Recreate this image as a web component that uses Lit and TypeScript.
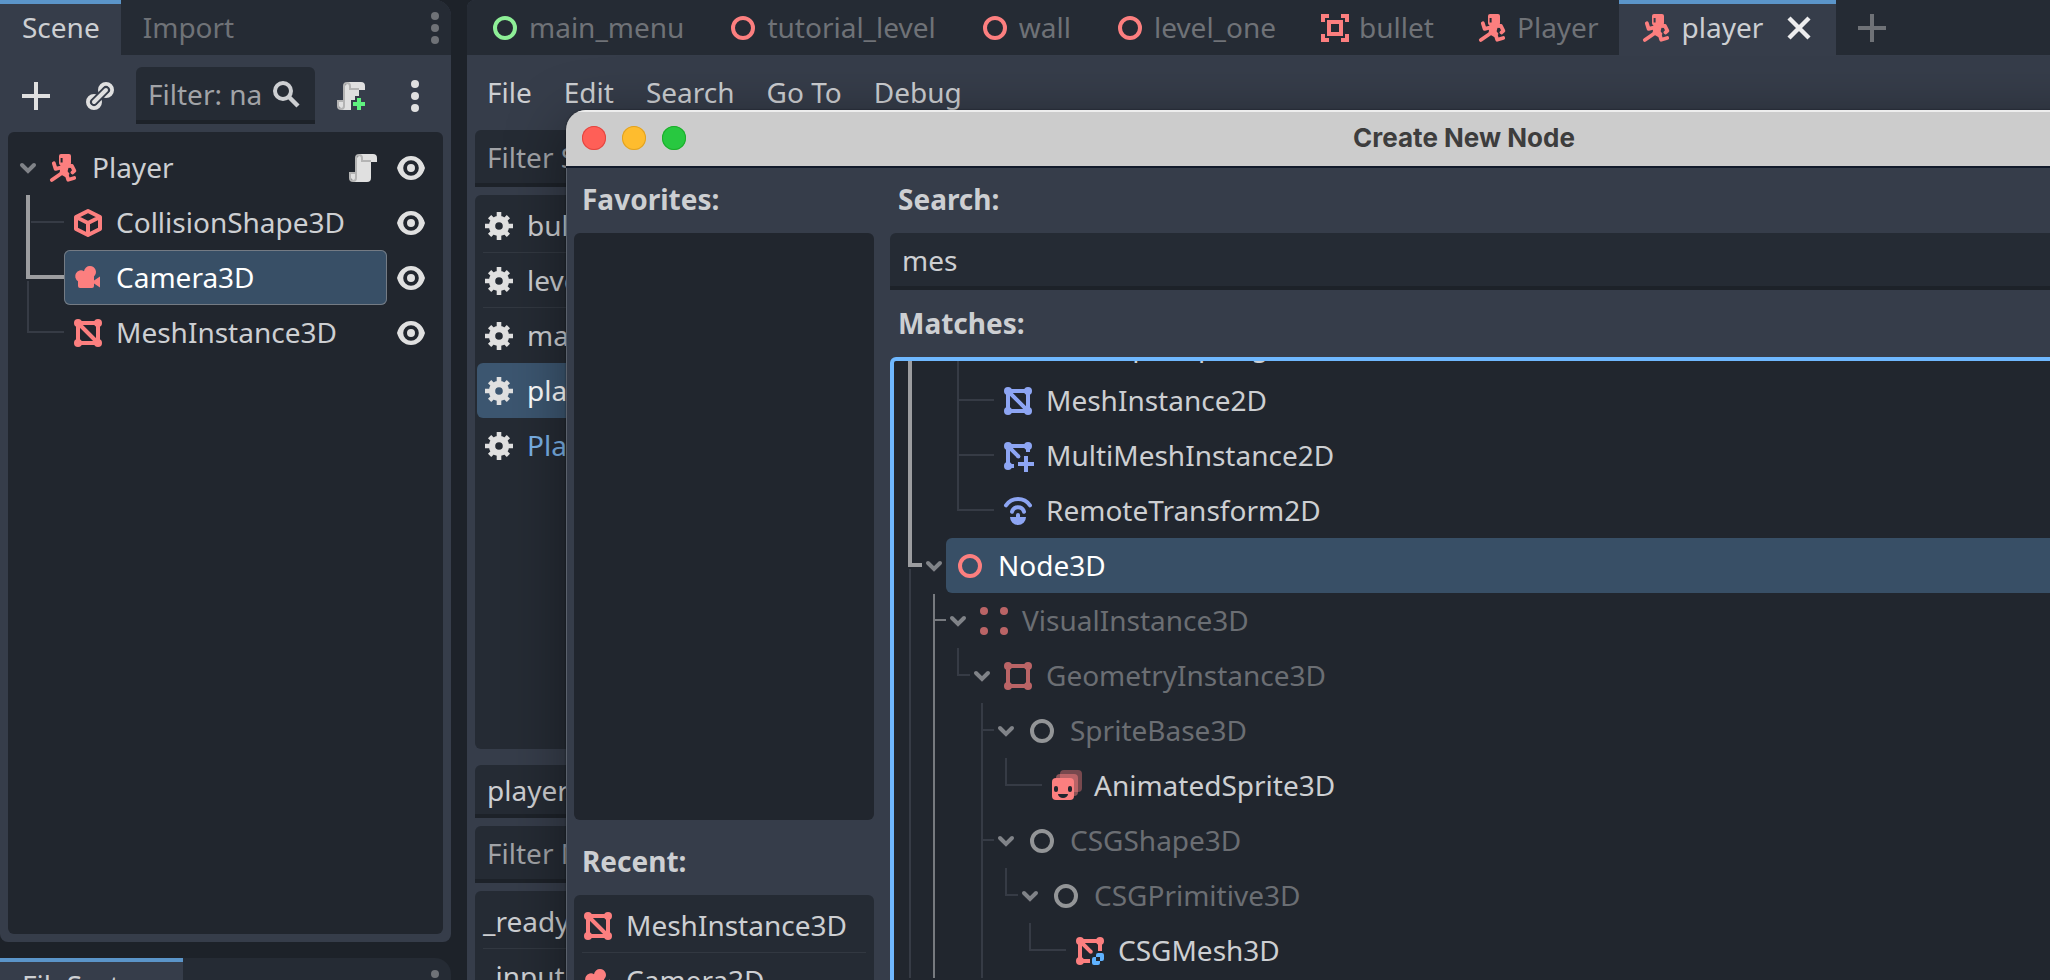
import { LitElement, html, svg, css, nothing } from "lit";
import { customElement, property } from "lit/decorators.js";
import { classMap } from "lit/directives/class-map.js";

const RED = "#fc7f7f";
const BLUE = "#8da5f3";
const GREY = "#e0e0e0";

const corners = (c: string) => svg`<g fill=${c}>
  <circle cx="3" cy="3" r="2"/><circle cx="13" cy="3" r="2"/>
  <circle cx="3" cy="13" r="2"/><circle cx="13" cy="13" r="2"/></g>`;

const ring = (c: string) => svg`<circle cx="8" cy="8" r="5" fill="none" stroke=${c} stroke-width="2"/>`;

const mesh = (c: string) => svg`${corners(c)}
  <path d="M3 3h10v10H3zL13 13" fill="none" stroke=${c} stroke-width="2"/>`;

const scroll = svg`
  <path fill="#e0e0e0" d="M6 1v1a1 1 0 0 0-1 1v10H4v-2H2v2a1 1 0 0 0 1 1v1h7a2 2 0 0 0 2-2V5h3V3a2 2 0 0 0-2-2z"/>
  <path fill="#b4b4b4" d="M6 1a2 2 0 0 0-2 2v7H1v3a2 2 0 0 0 4 0V3a1 1 0 0 1 2 0v2h5V4H8V3a2 2 0 0 0-2-2zM2 11h2v2a1 1 0 0 1-2 0z"/>`;

const ICONS: Record<string, unknown> = {
  node: ring("#c4c4c4"),
  node3d: ring(RED),
  control: ring("#8eef97"),
  mesh3d: mesh(RED),
  mesh2d: mesh(BLUE),
  geometry: svg`${corners(RED)}<path d="M3 3h10v10H3z" fill="none" stroke=${RED} stroke-width="2"/>`,
  visual: corners(RED),
  multimesh: svg`<g fill=${BLUE}><circle cx="3" cy="3" r="2"/><circle cx="13" cy="3" r="2"/><circle cx="3" cy="13" r="2"/></g>
    <path d="M13 6V3H3v10h3M3 3l5.3 5.3" fill="none" stroke=${BLUE} stroke-width="2"/>
    <path d="M12 8v8M8 12h8" stroke=${BLUE} stroke-width="2"/><circle cx="8.2" cy="8.2" r="1" fill=${BLUE}/>`,
  csgmesh: svg`<g fill=${RED}><circle cx="3" cy="3" r="2"/><circle cx="13" cy="3" r="2"/><circle cx="3" cy="13" r="2"/></g>
    <path d="M13 8V3H3v10h5M3 3l5.3 5.3" fill="none" stroke=${RED} stroke-width="2"/><circle cx="8.4" cy="8.4" r="1" fill=${RED}/>
    <path fill="#5fb2ff" fill-rule="evenodd" d="M12 9h2a1 1 0 0 1 1 1v2a1 1 0 0 1-1 1h-1v1a1 1 0 0 1-1 1h-2a1 1 0 0 1-1-1v-2a1 1 0 0 1 1-1h1v-1a1 1 0 0 1 1-1zM11 11v2h2v-2z"/>`,
  remote: svg`<g fill="none" stroke=${BLUE} stroke-width="2" stroke-linecap="round">
      <path d="M2 5.2C5 1 11 1 14 5.2"/><path d="M5 8.4a3.1 3.1 0 0 1 6 0"/></g>
    <path fill=${BLUE} d="M4 11h3v-1a1 1 0 0 1 2 0v1h3a4 4 0 0 1-8 0z"/>`,
  animated: svg`<g fill=${RED}><rect x="5" y="0" width="11" height="11" rx="2" opacity=".4"/>
      <rect x="3" y="2" width="11" height="11" rx="2" opacity=".5"/>
      <rect x="1" y="4" width="11" height="11" rx="2"/></g>
    <g fill="#21262e"><rect x="2" y="8" width="2" height="3" rx="1"/><rect x="9" y="8" width="2" height="3" rx="1"/>
      <path d="M4 12h5a2.5 2 0 0 1-5 0z"/></g>`,
  shape: svg`<path d="M8 2 2 5v6l6 3 6-3V5zM2 5l6 3 6-3M8 8v6" fill="none" stroke=${RED} stroke-width="2" stroke-linejoin="round"/>`,
  camera: svg`<path fill=${RED} d="M9 2a3 3 0 0 0-3 2.6A2.7 2.7 0 1 0 3 9.6V12a1 1 0 0 0 1 1h6a1 1 0 0 0 1-1v-1.2l3 2V7.2l-3 2V7.2A3 3 0 0 0 9 2z"/>`,
  body: svg`<path fill=${RED} fill-rule="evenodd" d="M6.5 1h4a1 1 0 0 1 1 1v3.6a1 1 0 0 1-1 1h-4a1 1 0 0 1-1-1V2a1 1 0 0 1 1-1zM6.3 3v2.2h1V3z"/>
    <path fill=${RED} d="M6.2 6.5h4.4L9.800 9.600l1 1.400-2 1.600-3-1.700z"/>
    <g fill="none" stroke=${RED} stroke-width="1.900" stroke-linecap="round" stroke-linejoin="round">
      <path d="M2.900 5.600l.9 2.800 3.600-.8"/><path d="M9.600 6.900l2.400.1 1.200 2.400-1 .8"/>
      <path d="M6.800 10.600 1.900 14"/><path d="M9.200 10.800l.9 3.100 3-.9"/></g>`,
  area: svg`<g fill="none" stroke=${RED} stroke-width="2"><path d="M2 5V2h3M11 2h3v3M14 11v3h-3M5 14H2v-3"/><path d="M5 5h6v6H5z"/></g>`,
  script: scroll,
  scriptadd: svg`<mask id="cut"><path d="M0 0h16v16H0z" fill="#fff"/><path d="M10 8h4v2h2v6H8v-6h2z" fill="#000"/></mask>
    <g mask="url(#cut)">${scroll}</g><path fill="#5ff27f" d="M11 9h2v2h2v2h-2v2h-2v-2H9v-2h2z"/>`,
  eye: svg`<path fill=${GREY} fill-rule="evenodd" d="M8 2C4.600 2 2 4.400 1 8c1 3.600 3.600 6 7 6s6-2.400 7-6c-1-3.600-3.600-6-7-6zM8 4.100a3.900 3.900 0 1 1 0 7.800 3.900 3.900 0 0 1 0-7.800zM8 6a2 2 0 1 0 0 4 2 2 0 0 0 0-4z"/>`,
  gear: svg`<g fill="none" stroke=${GREY}><circle cx="8" cy="8" r="3.500" stroke-width="3.200"/>
    <g stroke-width="2.300"><path d="M8 1v3M8 12v3M1 8h3M12 8h3"/><path d="M3.300 3.300l2 2M10.700 10.700l2 2M3.300 12.700l2-2M10.700 5.300l2-2"/></g></g>`,
  add: svg`<path d="M8 1v14M1 8h14" stroke="currentColor" stroke-width="2"/>`,
  link: svg`<g fill="none"><circle cx="11" cy="5" r="2.900" stroke=${GREY} stroke-width="2.200"/><circle cx="5" cy="11" r="2.900" stroke=${GREY} stroke-width="2.200"/>
    <path d="M5 11l6-6" stroke="#363d4a" stroke-width="4" stroke-linecap="round"/><path d="M5 11l6-6" stroke=${GREY} stroke-width="2" stroke-linecap="round"/></g>`,
  search: svg`<circle cx="6" cy="6" r="4" fill="none" stroke="#cdcfd2" stroke-width="2"/><path d="M9 9l4.500 4.500" stroke="#cdcfd2" stroke-width="2.200"/>`,
  more: svg`<g fill="currentColor"><circle cx="8" cy="2" r="2"/><circle cx="8" cy="8" r="2"/><circle cx="8" cy="14" r="2"/></g>`,
  close: svg`<path d="M3 3l10 10M13 3L3 13" stroke="#ededee" stroke-width="2.200"/>`,
};

const icon = (name: string) =>
  html`<svg class="icon" viewBox="0 0 16 16" width="32" height="32" aria-hidden="true">${ICONS[name]}</svg>`;

const shared = css`
  * { box-sizing: border-box; }
  button, input { font: inherit; color: inherit; border: 0; margin: 0; padding: 0; background: none; border-radius: 0; outline: 0; text-align: left; }
  .icon { display: block; flex: none; overflow: visible; }
`;

/* Guide marks: each column of a row names the line it carries.
   | straight, + branch, L last branch, blank none; T is the highlighted path,
   H the highlighted turn, B a branch leaving the highlighted path,
   M and N the children of a selected item. */
type Row = { text: string; icon: string; guides: string; open?: boolean; selected?: boolean; dim?: boolean; script?: boolean };

const THIN = "#363b45";
const MID = "#777a7f";
const THICK = "#9c9da0";

@customElement("node-tree")
class NodeTree extends LitElement {
  @property({ attribute: false }) rows: Row[] = [];
  @property({ type: Boolean }) actions = false;

  static styles = [shared, css`
    :host { display: block; }
    .row { display: flex; height: 55px; }
    .guide, .fold { display: block; flex: none; overflow: visible; }
    .item { display: flex; align-items: center; gap: 12px; flex: 1; min-width: 0; height: 55px; padding: 0 8px; color: #cdcfd2; white-space: nowrap; border-radius: 6px; }
    .dim { color: #6b6e73; }
    .dim .icon { opacity: .7; }
    .selected { background: #384f66; color: #fff; }
    .outlined { box-shadow: inset 0 0 0 1px #747b84; }
    .tools { display: flex; align-items: center; gap: 16px; padding: 0 16px 0 8px; }
  `];

  private guide(kind: string, leaf: boolean) {
    const end = leaf ? 48 : 24;
    const v = (c: string, y1: number, y2: number) => svg`<rect x="11" y=${y1} width="2" height=${y2 - y1} fill=${c}/>`;
    const h = (c: string, x = 13) => svg`<rect x=${x} y="26" width=${end - x} height="2" fill=${c}/>`;
    const bar = svg`<rect x="10" y="0" width="4" height="55" fill=${THICK}/>`;
    const marks: Record<string, unknown> = {
      "|": v(THIN, 0, 55),
      "+": svg`${v(THIN, 0, 55)}${h(THIN)}`,
      "L": svg`${v(THIN, 0, 28)}${h(THIN)}`,
      "M": v(MID, 0, 55),
      "N": svg`${v(MID, 1, 55)}${h(MID)}`,
      "T": bar,
      "B": svg`${bar}${h(THIN, 15)}`,
      "H": svg`<path d=${`M10 0h4v25h${end - 14}v4H10z`} fill=${THICK}/>${v(THIN, 31, 55)}`,
    };
    return html`<svg class="guide" width="24" height="55" aria-hidden="true">${marks[kind] ?? nothing}</svg>`;
  }

  render() {
    return html`<div role="tree">${this.rows.map((r) => {
      const leaf = !r.open;
      const cells = [...r.guides];
      return html`<div class="row" role="treeitem" aria-selected=${r.selected ? "true" : "false"}>
        ${cells.map((c, i) => this.guide(c, leaf && i === cells.length - 1))}
        <svg class="fold" width="24" height="55" aria-hidden="true">
          ${r.open ? svg`<path d="M6 25l6 6 6-6" fill="none" stroke="#808388" stroke-width="4" stroke-linecap="round"/>` : nothing}
        </svg>
        <div class=${classMap({ item: true, dim: !!r.dim, selected: !!r.selected, outlined: !!r.selected && this.actions })}>
          ${icon(r.icon)}<span>${r.text}</span>
        </div>
        ${this.actions ? html`<div class="tools">
          ${r.script ? html`<button aria-label="Open script">${icon("script")}</button>` : nothing}
          <button aria-label="Toggle visibility">${icon("eye")}</button>
        </div>` : nothing}
      </div>`;
    })}</div>`;
  }
}

const SCENE: Row[] = [
  { text: "Player", icon: "body", guides: "", open: true, script: true },
  { text: "CollisionShape3D", icon: "shape", guides: "B" },
  { text: "Camera3D", icon: "camera", guides: "H", selected: true },
  { text: "MeshInstance3D", icon: "mesh3d", guides: "L" },
];

const MATCHES: Row[] = [
  { text: "DampedSpringJoint2D", icon: "mesh2d", guides: "T |L" },
  { text: "MeshInstance2D", icon: "mesh2d", guides: "T +" },
  { text: "MultiMeshInstance2D", icon: "multimesh", guides: "T +" },
  { text: "RemoteTransform2D", icon: "remote", guides: "T L" },
  { text: "Node3D", icon: "node3d", guides: "H", open: true, selected: true },
  { text: "VisualInstance3D", icon: "visual", guides: "|N", open: true, dim: true },
  { text: "GeometryInstance3D", icon: "geometry", guides: "|ML", open: true, dim: true },
  { text: "SpriteBase3D", icon: "node", guides: "|M +", open: true, dim: true },
  { text: "AnimatedSprite3D", icon: "animated", guides: "|M |L" },
  { text: "CSGShape3D", icon: "node", guides: "|M +", open: true, dim: true },
  { text: "CSGPrimitive3D", icon: "node", guides: "|M |L", open: true, dim: true },
  { text: "CSGMesh3D", icon: "csgmesh", guides: "|M | L" },
];

const TABS = [
  { text: "main_menu", icon: "control" },
  { text: "tutorial_level", icon: "node3d" },
  { text: "wall", icon: "node3d" },
  { text: "level_one", icon: "node3d" },
  { text: "bullet", icon: "area" },
  { text: "Player", icon: "body" },
  { text: "player", icon: "body", active: true },
];

const SCRIPTS = [
  { text: "bullet.gd", line: true },
  { text: "level_one.gd", line: true },
  { text: "main_menu.gd" },
  { text: "player.gd", selected: true },
  { text: "Player.gd", open: true },
];

@customElement("app-root")
class AppRoot extends LitElement {
  static styles = [shared, css`
    :host { display: block; position: relative; height: 100vh; overflow: hidden; background: #1d2229; color: #cdcfd2; font: 28px/55px "Noto Sans", "Open Sans", sans-serif; }
    .editor { display: flex; gap: 16px; height: 100%; }
    .side { display: flex; flex-direction: column; gap: 16px; flex: none; width: 451px; }
    .dock { flex: none; display: flex; flex-direction: column; background: #363d4a; border-radius: 0 16px 8px 8px; overflow: hidden; }
    .dock-scene { height: calc(100vh - 38px); }
    .tabs { display: flex; align-items: center; flex: none; height: 55px; background: #252b34; color: #6f7277; }
    .tab { display: flex; align-items: center; gap: 8px; height: 55px; padding: 0 21px 0 22px; white-space: nowrap; }
    .active { background: #363d4a; color: #cdcfd2; box-shadow: inset 0 4px #5b95c9; }
    .close { margin-left: 12px; }
    .push { margin-left: auto; }
    .new { margin-left: 20px; }
    .toolbar { display: flex; align-items: center; gap: 8px; padding: 12px 8px 8px; color: #e0e0e0; }
    .tool { display: flex; justify-content: center; align-items: center; flex: none; width: 56px; height: 57px; }
    .field { display: flex; align-items: center; gap: 8px; flex: none; height: 57px; padding: 2px 12px 0; background: #252b34; border-bottom: 4px solid #1d2229; border-radius: 6px 6px 0 0; color: #cdcfd2; }
    .field input { flex: 1; min-width: 0; width: 0; height: 51px; }
    .field input::placeholder { color: #a1a3a7; opacity: 1; }
    .grow { flex: 1; }
    .panel { background: #21262e; border-radius: 6px; }
    .tree { flex: 1; margin: 0 8px 8px; padding: 8px 0 8px 8px; }
    .main { flex: 1; min-width: 0; display: flex; flex-direction: column; background: #363d4a; border-radius: 8px 0 0 0; overflow: hidden; }
    .menu { display: flex; gap: 32px; flex: none; height: 51px; margin: 12px 0; padding: 0 20px; line-height: 51px; }
    .scripts { display: flex; flex-direction: column; gap: 8px; width: 400px; padding: 0 8px; }
    .list { flex: none; background: #252b34; border-radius: 6px; padding: 3px 2px; overflow: hidden; }
    .files { height: calc(100vh - 426px); }
    .short { height: 53px; margin-top: 8px; }
    .entry { display: flex; align-items: center; gap: 12px; width: 100%; height: 55px; padding: 0 6px; border-radius: 6px; white-space: nowrap; }
    .line { background: linear-gradient(#323841, #323841) 6px 100% / calc(100% - 12px) 1px no-repeat; }
    .chosen { background: #3c5670; color: #fff; }
    .opened { color: #7ab2e8; }
    .dialog { position: absolute; left: 566px; right: -312px; top: 110px; height: 100vh; display: flex; flex-direction: column; background: #363d4a; border-radius: 20px 20px 0 0; box-shadow: 0 0 2px #0008, 0 12px 60px #0006; overflow: hidden; }
    .title { display: grid; grid-template-columns: 1fr auto 1fr; align-items: center; flex: none; height: 58px; padding: 0 16px; background: #ccc; border-bottom: 2px solid #111a2a; box-shadow: inset 0 2px #ededed; color: #3d3d3d; }
    .title h1 { margin: 0; font: 700 26px/54px Inter, sans-serif; }
    .lights { display: flex; gap: 16px; }
    .light { width: 24px; height: 24px; border-radius: 50%; }
    .shut { background: #ff5f57; box-shadow: inset 0 0 0 1px #e14640; }
    .mini { background: #febc2e; box-shadow: inset 0 0 0 1px #dfa123; }
    .zoomed { background: #28c840; box-shadow: inset 0 0 0 1px #1dad2b; }
    .body { flex: 1; min-height: 0; display: flex; gap: 16px; padding: 6px 8px 0; box-shadow: inset 1px 0 #5a616c; }
    .col { display: flex; flex-direction: column; gap: 8px; }
    .left { flex: none; width: 300px; }
    .right { flex: 1; min-width: 0; }
    .cap { display: block; flex: none; margin: 0; padding: 0 8px; font-size: 28px; font-weight: 700; line-height: 51px; }
    .favs { flex: none; height: calc(100vh - 393px); margin-bottom: 8px; }
    .recent { padding: 3px 2px; }
    .matches { flex: 1; min-height: 0; padding: 0 4px; border: 4px solid #6fb8ff; border-radius: 6px; overflow: hidden; }
    .scrolled { margin-top: -43px; }
  `];

  render() {
    return html`
      <div class="editor">
        <aside class="side">
          <section class="dock dock-scene">
            <div class="tabs" role="tablist">
              <button class="tab active" role="tab">Scene</button>
              <button class="tab" role="tab">Import</button>
              <button class="push" aria-label="Dock options">${icon("more")}</button>
            </div>
            <div class="toolbar">
              <button class="tool" aria-label="Add node">${icon("add")}</button>
              <button class="tool" aria-label="Instantiate scene">${icon("link")}</button>
              <div class="field grow">
                <input aria-label="Filter nodes" placeholder="Filter: name, t:type, g:group">
                ${icon("search")}
              </div>
              <button class="tool" aria-label="Attach script">${icon("scriptadd")}</button>
              <button class="tool" aria-label="More options">${icon("more")}</button>
            </div>
            <div class="panel tree"><node-tree .rows=${SCENE} actions></node-tree></div>
          </section>
          <section class="dock">
            <div class="tabs" role="tablist">
              <button class="tab active" role="tab">FileSystem</button>
              <button class="push" aria-label="Dock options">${icon("more")}</button>
            </div>
          </section>
        </aside>

        <main class="main">
          <div class="tabs" role="tablist">
            ${TABS.map((t) => html`<button class=${classMap({ tab: true, active: !!t.active })} role="tab">
              ${icon(t.icon)}<span>${t.text}</span>${t.active ? html`<span class="close">${icon("close")}</span>` : nothing}
            </button>`)}
            <button class="new" aria-label="New scene">${icon("add")}</button>
          </div>
          <nav class="menu">
            ${["File", "Edit", "Search", "Go To", "Debug"].map((m) => html`<button>${m}</button>`)}
          </nav>
          <div class="scripts">
            <div class="field"><input aria-label="Filter scripts" placeholder="Filter Scripts"></div>
            <div class="list files">
              ${SCRIPTS.map((s) => html`<button class=${classMap({ entry: true, line: !!s.line, chosen: !!s.selected, opened: !!s.open })}>
                ${icon("gear")}<span>${s.text}</span>
              </button>`)}
            </div>
            <div class="field short"><input aria-label="Current script" readonly .value=${"player.gd"}></div>
            <div class="field"><input aria-label="Filter methods" placeholder="Filter Methods"></div>
            <div class="list">
              <button class="entry line">_ready</button>
              <button class="entry line">_input</button>
            </div>
          </div>
        </main>
      </div>

      <section class="dialog" role="dialog" aria-labelledby="dialog-title">
        <header class="title">
          <div class="lights">
            <button class="light shut" aria-label="Close"></button>
            <button class="light mini" aria-label="Minimize"></button>
            <button class="light zoomed" aria-label="Zoom"></button>
          </div>
          <h1 id="dialog-title">Create New Node</h1>
        </header>
        <div class="body">
          <div class="col left">
            <h2 class="cap">Favorites:</h2>
            <div class="panel favs"></div>
            <h2 class="cap">Recent:</h2>
            <div class="list recent">
              <button class="entry line">${icon("mesh3d")}<span>MeshInstance3D</span></button>
              <button class="entry line">${icon("camera")}<span>Camera3D</span></button>
            </div>
          </div>
          <div class="col right">
            <label class="cap" for="search">Search:</label>
            <div class="field"><input id="search" .value=${"mes"}></div>
            <h2 class="cap">Matches:</h2>
            <div class="panel matches">
              <div class="scrolled"><node-tree .rows=${MATCHES}></node-tree></div>
            </div>
          </div>
        </div>
      </section>`;
  }
}
